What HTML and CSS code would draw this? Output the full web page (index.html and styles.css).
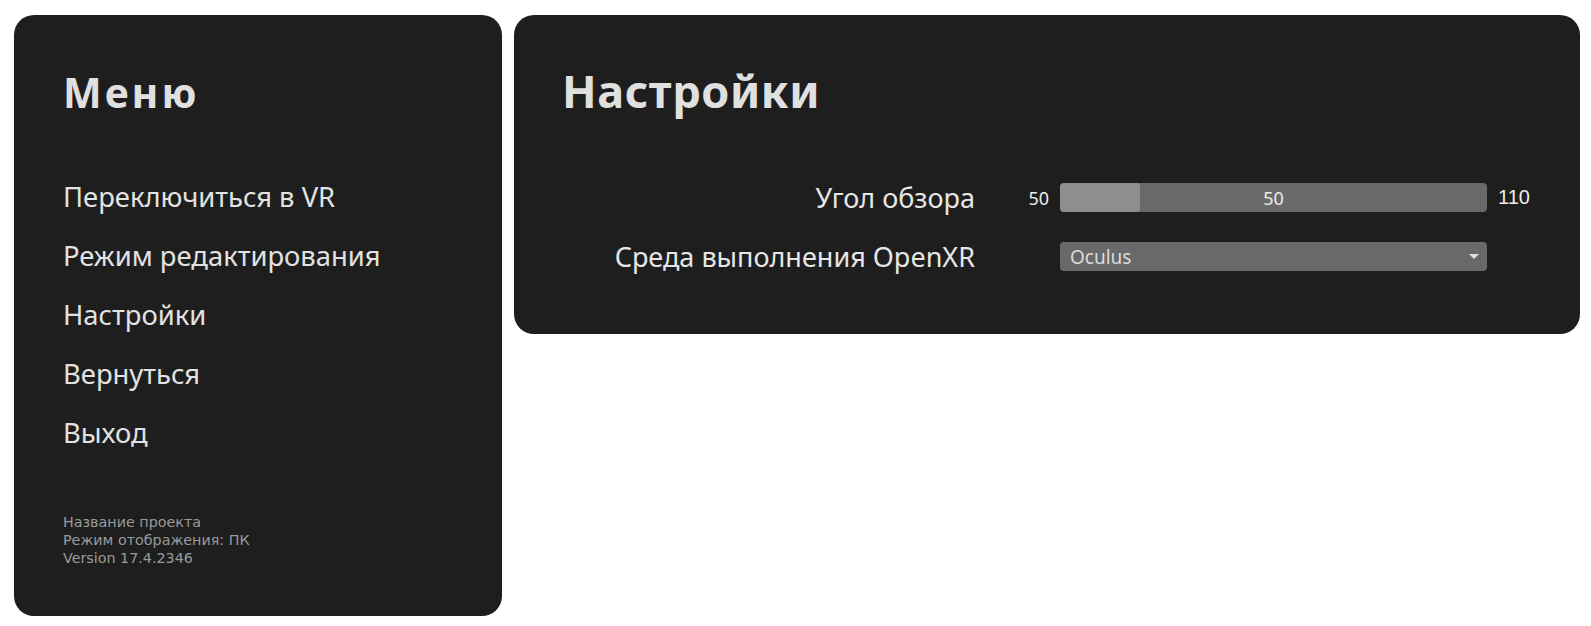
FILE: index.html
```html
<!DOCTYPE html>
<html lang="ru">
<head>
<meta charset="utf-8">
<title>Настройки</title>
<link rel="stylesheet" href="styles.css">
</head>
<body>
<div class="app">
  <aside class="panel menu">
    <h1 class="menu-title">Меню</h1>
    <ul class="menu-list">
      <li class="menu-item">Переключиться в VR</li>
      <li class="menu-item">Режим редактирования</li>
      <li class="menu-item">Настройки</li>
      <li class="menu-item">Вернуться</li>
      <li class="menu-item">Выход</li>
    </ul>
    <div class="footer">
      <div>Название проекта</div>
      <div>Режим отображения: ПК</div>
      <div>Version 17.4.2346</div>
    </div>
  </aside>
  <main class="panel settings">
    <h2 class="settings-title">Настройки</h2>
    <div class="rows">
      <div class="label">Угол обзора</div>
      <div class="range-min">50</div>
      <div class="slider">
        <div class="slider-fill" style="width: 80px"></div>
        <span class="slider-value">50</span>
      </div>
      <div class="range-max">110</div>

      <div class="label">Среда выполнения OpenXR</div>
      <div class="range-min"></div>
      <div class="select">
        <span class="select-value">Oculus</span>
        <svg class="select-arrow" width="10" height="5" viewBox="0 0 10 5"><path d="M0 0H10L5 5Z" fill="#e0e0e0"/></svg>
      </div>
      <div class="range-max"></div>
    </div>
  </main>
</div>
</body>
</html>
```
FILE: styles.css
```css
* { box-sizing: border-box; }
html, body { margin: 0; padding: 0; background: #ffffff; }
body {
  font-family: "Noto Sans", "Open Sans", sans-serif;
  color: #e2e2e2;
}
.app {
  display: flex;
  align-items: flex-start;
  gap: 12px;
  padding: 15px 11px 10px 14px;
}
.panel {
  background: #1e1e1e;
  border-radius: 20px;
}
.menu {
  width: 488px;
  height: 601px;
  flex: none;
  display: flex;
  flex-direction: column;
  padding: 53px 40px 49px 49px;
}
.menu-title {
  margin: 0;
  font-size: 41px;
  line-height: 48px;
  font-weight: 700;
  letter-spacing: 3px;
  color: #e0e0e0;
}
.menu-list {
  list-style: none;
  margin: 51px 0 0;
  padding: 0;
}
.menu-item {
  font-size: 27.4px;
  line-height: 59px;
  color: #e2e2e2;
}
.footer {
  margin-top: auto;
  font-family: "DejaVu Sans", "Noto Sans", sans-serif;
  font-size: 14.3px;
  line-height: 18px;
  color: #9a9a9a;
}
.settings {
  flex: 1;
  height: 319px;
  padding: 48px 48px 0 48px;
}
.settings-title {
  margin: 0;
  font-size: 45px;
  line-height: 56px;
  font-weight: 700;
  letter-spacing: 0.6px;
  color: #e0e0e0;
}
.rows {
  margin-top: 64px;
  display: grid;
  grid-template-columns: 413px 85px 427px auto;
  grid-auto-rows: 29px;
  row-gap: 30px;
  align-items: center;
}
.label {
  text-align: right;
  font-size: 27px;
  line-height: 29px;
  white-space: nowrap;
  color: #e6e6e6;
}
.range-min {
  text-align: right;
  padding-right: 11px;
  font-size: 18px;
  color: #ececec;
}
.range-max {
  padding-left: 11px;
  font-size: 20px;
  font-family: "Liberation Sans", Arial, sans-serif;
  color: #ececec;
}
.slider {
  position: relative;
  height: 29px;
  background: #696969;
  border-radius: 4px;
  display: flex;
  align-items: center;
  justify-content: center;
  overflow: hidden;
}
.slider-fill {
  position: absolute;
  left: 0;
  top: 0;
  bottom: 0;
  background: #8f8f8f;
  border-radius: 4px;
}
.slider-value {
  position: relative;
  font-size: 18px;
  color: #ececec;
}
.select {
  height: 29px;
  background: #696969;
  border-radius: 4px;
  display: flex;
  align-items: center;
  justify-content: space-between;
  padding: 0 8px 0 10px;
}
.select-value {
  font-size: 19px;
  color: #dcdcdc;
}
.select-arrow { display: block; }
```
